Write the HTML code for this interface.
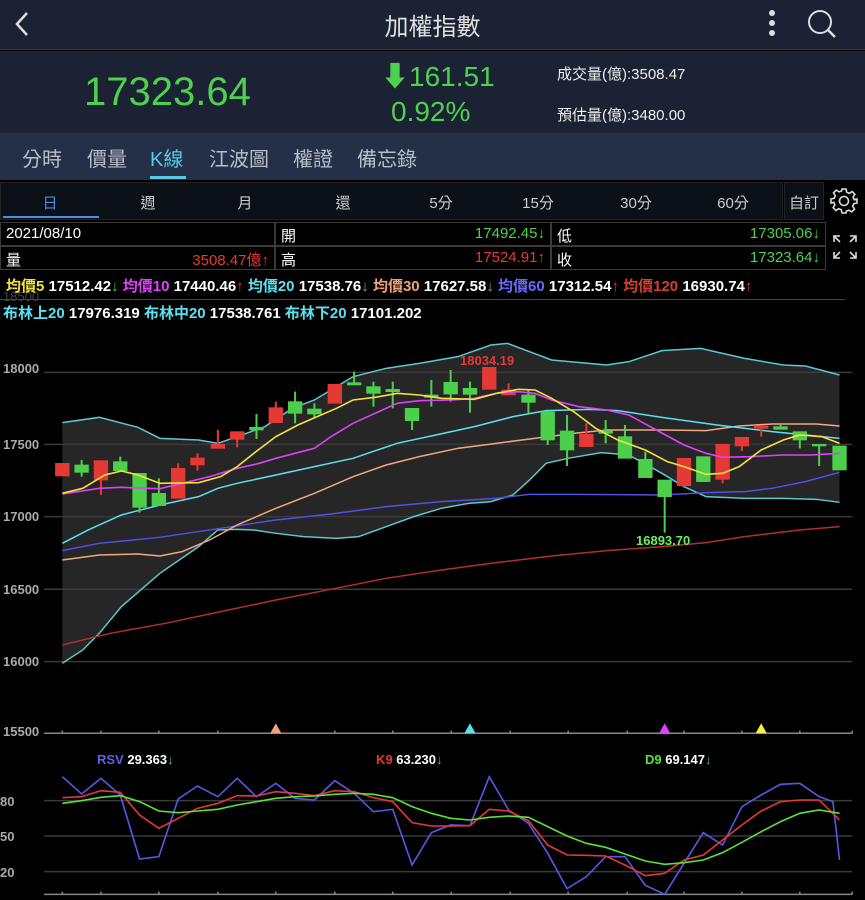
<!DOCTYPE html>
<html><head><meta charset="utf-8"><style>
*{margin:0;padding:0;box-sizing:border-box}
body{width:865px;height:900px;background:#000;overflow:hidden;font-family:"Liberation Sans","Noto Sans CJK TC",sans-serif;position:relative;color:#fff}
.a{position:absolute;white-space:nowrap}
.hdr{left:0;top:0;width:865px;height:50px;background:#1a2233;border-bottom:1px solid #2a3346}
.q{left:0;top:51px;width:865px;height:82px;background:#1a2233}
.tabs{left:0;top:133px;width:865px;height:47px;background:#233047}
.tab{top:143px;font-size:20px;color:#b8bfcc}
.per{left:0;top:182px;width:783px;height:38px;background:#0c1017;border:1px solid #222}
.pt{top:192px;font-size:15px;color:#ccc;transform:translateX(-50%)}
.cell{height:24px;border:1px solid #3a3a3a;background:#000;font-size:15px}
.g{color:#4fd04f}.r{color:#e53935}
.lg{top:275px;font-size:15px;font-weight:bold;color:#fff}
</style></head><body>
<div class="a hdr"></div>
<svg class="a" style="left:12px;top:10px" width="20" height="28"><path d="M15 3 L5 14 L15 25" stroke="#ddd" stroke-width="2.5" fill="none"/></svg>
<div class="a" style="left:0;width:865px;text-align:center;top:7px;font-size:24px;color:#e0e0e0">加權指數</div>
<svg class="a" style="left:764px;top:8px" width="16" height="30"><circle cx="8" cy="5" r="3" fill="#ddd"/><circle cx="8" cy="15" r="3" fill="#ddd"/><circle cx="8" cy="25" r="3" fill="#ddd"/></svg>
<svg class="a" style="left:806px;top:8px" width="32" height="32"><circle cx="14" cy="14" r="11" stroke="#ddd" stroke-width="2" fill="none"/><path d="M22 22 L29 29" stroke="#ddd" stroke-width="2.5"/></svg>
<div class="a q"></div>
<div class="a g" style="left:84px;top:70px;font-size:40px">17323.64</div>
<div class="a g" style="left:381px;top:55px;font-size:28px">⬇161.51</div>
<div class="a g" style="left:391px;top:96px;font-size:28px">0.92%</div>
<div class="a" style="left:557px;top:63px;font-size:15px;color:#eee">成交量(億):3508.47</div>
<div class="a" style="left:557px;top:104px;font-size:15px;color:#eee">預估量(億):3480.00</div>
<div class="a tabs"></div>
<div class="a tab" style="left:22px">分時</div>
<div class="a tab" style="left:87px">價量</div>
<div class="a tab" style="left:150px;color:#5ac8e8">K線</div>
<div class="a tab" style="left:209px">江波圖</div>
<div class="a tab" style="left:293px">權證</div>
<div class="a tab" style="left:357px">備忘錄</div>
<div class="a" style="left:150px;top:176px;width:36px;height:3px;background:#5ac8e8"></div>
<div class="a per"></div>
<div class="a pt" style="left:50px;color:#4a90e2">日</div>
<div class="a" style="left:3px;top:216px;width:96px;height:2px;background:#4a90e2"></div>
<div class="a pt" style="left:148px">週</div><div class="a pt" style="left:245px">月</div><div class="a pt" style="left:343px">還</div>
<div class="a pt" style="left:441px">5分</div><div class="a pt" style="left:538px">15分</div><div class="a pt" style="left:636px">30分</div><div class="a pt" style="left:733px">60分</div>
<div class="a" style="left:784px;top:182px;width:40px;height:38px;background:#0c1017;border:1px solid #222"></div>
<div class="a pt" style="left:804px">自訂</div>
<svg class="a" style="left:829px;top:186px" width="30" height="30" viewBox="0 0 30 30"><g fill="none" stroke="#ddd" stroke-width="1.6"><circle cx="15" cy="15" r="4.5"/><path d="M13 3h4l.7 3.2 2.6 1.1 2.8-1.8 2.8 2.8-1.8 2.8 1.1 2.6L28 13v4l-3.2.7-1.1 2.6 1.8 2.8-2.8 2.8-2.8-1.8-2.6 1.1L17 27h-4l-.7-3.2-2.6-1.1-2.8 1.8-2.8-2.8 1.8-2.8-1.1-2.6L2 17v-4l3.2-.7 1.1-2.6-1.8-2.8 2.8-2.8 2.8 1.8 2.6-1.1z"/></g></svg>
<div class="a cell" style="left:0;top:222px;width:275px;padding:2px 5px">2021/08/10</div>
<div class="a cell" style="left:275px;top:222px;width:276px;padding:2px 5px">開<span class="g" style="float:right">17492.45↓</span></div>
<div class="a cell" style="left:551px;top:222px;width:275px;padding:2px 5px">低<span class="g" style="float:right">17305.06↓</span></div>
<div class="a cell" style="left:0;top:246px;width:275px;padding:2px 5px">量<span class="r" style="float:right">3508.47億↑</span></div>
<div class="a cell" style="left:275px;top:246px;width:276px;padding:2px 5px">高<span class="r" style="float:right">17524.91↑</span></div>
<div class="a cell" style="left:551px;top:246px;width:275px;padding:2px 5px">收<span class="g" style="float:right">17323.64↓</span></div>
<svg class="a" style="left:832px;top:234px" width="26" height="26"><g stroke="#ddd" stroke-width="1.6" fill="none"><path d="M2 8V2h6M2 2l6 6M24 8V2h-6M24 2l-6 6M2 18v6h6M2 24l6-6M24 18v6h-6M24 24l-6-6"/></g></svg>
<div class="a" style="left:3px;top:289px;font-size:13px;color:#444">18500</div>
<div class="a lg" style="left:6px"><span style="color:#f5e23c">均價5</span> 17512.42<span class="g">↓</span> <span style="color:#e040fb">均價10</span> 17440.46<span class="r">↑</span> <span style="color:#5ce0f0">均價20</span> 17538.76<span class="g">↓</span> <span style="color:#f0a07a">均價30</span> 17627.58<span class="g">↓</span> <span style="color:#6a6aff">均價60</span> 17312.54<span class="r">↑</span> <span style="color:#d04030">均價120</span> 16930.74<span class="r">↑</span></div>
<div class="a" style="left:0;top:299px;width:845px;height:1px;background:#444"></div>
<div class="a lg" style="left:3px;top:302px;color:#fff"><span style="color:#5ce0f0">布林上20</span> 17976.319 <span style="color:#5ce0f0">布林中20</span> 17538.761 <span style="color:#5ce0f0">布林下20</span> 17101.202</div>

<svg class="a" style="left:0;top:340px" width="865" height="400">
<g transform="scale(0.5516,0.3333)" fill="none">
<polygon fill="#262626" points="113,248 180,232 250,262 290,295 360,300 395,310 430,290 480,260 530,205 570,180 600,150 640,110 700,85 760,70 830,50 890,15 920,10 1000,60 1100,75 1140,65 1200,32 1270,25 1350,55 1420,75 1460,78 1522,105 1522,487 1480,478 1420,475 1350,475 1280,470 1240,440 1200,400 1140,345 1090,338 1030,355 990,370 960,420 930,465 890,485 850,490 800,505 750,530 700,560 650,590 610,595 550,590 500,580 460,570 430,568 395,570 360,620 290,700 220,800 180,880 150,930 113,970"/>
<g stroke="#3a3a3a" stroke-width="1.5">
<path vector-effect="non-scaling-stroke" d="M80 97H1545M80 313H1545M80 530H1545M80 748H1545M80 965H1545"/>
<path vector-effect="non-scaling-stroke" stroke="#888" d="M80 1180H1545M113 1172v8M183 1172v8M288 1172v8M395 1172v8M500 1172v8M607 1172v8M712 1172v8M818 1172v8M925 1172v8M1030 1172v8M1137 1172v8M1240 1172v8M1345 1172v8M1450 1172v8M1545 1172v8"/>
</g>
<g stroke-width="1.5">
<polyline vector-effect="non-scaling-stroke" stroke="#5cc8d0" points="113,248 180,232 250,262 290,295 360,300 395,310 430,290 480,260 530,205 570,180 600,150 640,110 700,85 760,70 830,50 890,15 920,10 1000,60 1100,75 1140,65 1200,32 1270,25 1350,55 1420,75 1460,78 1522,105"/>
<polyline vector-effect="non-scaling-stroke" stroke="#5cc8d0" points="113,970 150,930 180,880 220,800 290,700 360,620 395,570 430,568 460,570 500,580 550,590 610,595 650,590 700,560 750,530 800,505 850,490 890,485 930,465 960,420 990,370 1030,355 1090,338 1140,345 1200,400 1240,440 1280,470 1350,475 1420,475 1480,478 1522,487"/>
<polyline vector-effect="non-scaling-stroke" stroke="#b03030" points="113,915 200,880 300,850 400,815 500,780 600,748 700,715 800,690 900,668 1000,648 1100,632 1200,620 1280,608 1350,590 1450,570 1522,560"/>
<polyline vector-effect="non-scaling-stroke" stroke="#5050e8" points="113,632 180,610 290,592 400,565 500,540 600,522 700,500 800,485 900,475 960,463 1040,463 1120,464 1200,465 1280,458 1350,455 1400,445 1460,425 1522,397"/>
<polyline vector-effect="non-scaling-stroke" stroke="#f0a880" points="113,660 180,645 250,642 290,648 330,635 380,600 430,555 500,505 570,460 640,410 700,375 760,350 830,325 900,310 960,297 1040,280 1100,270 1200,270 1280,272 1340,258 1400,252 1480,252 1522,258"/>
<polyline vector-effect="non-scaling-stroke" stroke="#5ce0f0" points="113,610 160,570 220,525 290,495 360,470 395,445 430,430 500,405 570,380 640,355 720,310 790,285 860,260 930,230 990,212 1070,208 1120,212 1200,232 1300,255 1400,275 1522,295"/>
</g>
<g stroke-width="2" stroke-linecap="butt">
<g stroke="#e53935" fill="#e53935">
<path vector-effect="non-scaling-stroke" d="M183 362V465M323 370V475M358 340V392M395 270V325M430 275V322M500 185V248M607 133V190M887 82V148M922 130V165M1063 250V320M1240 355V440M1310 313V430M1345 292V333M1380 258V290"/>
<rect x="101" y="370" width="24" height="38"/><rect x="171" y="362" width="24" height="58"/><rect x="311" y="385" width="24" height="90"/><rect x="346" y="354" width="24" height="21"/><rect x="383" y="313" width="24" height="12"/><rect x="418" y="275" width="24" height="23"/><rect x="488" y="203" width="24" height="45"/><rect x="595" y="133" width="24" height="57"/><rect x="875" y="82" width="24" height="66"/><rect x="910" y="150" width="24" height="15"/><rect x="1051" y="283" width="24" height="37"/><rect x="1228" y="355" width="24" height="82"/><rect x="1298" y="313" width="24" height="105"/><rect x="1333" y="292" width="24" height="26"/><rect x="1368" y="258" width="24" height="7"/>
</g>
<g stroke="#4cd04c" fill="#4cd04c">
<path vector-effect="non-scaling-stroke" d="M148 360V410M218 350V392M253 400V518M288 415V497M465 222V297M535 155V250M570 190V235M642 95V135M677 125V200M712 125V205M747 205V270M782 120V200M817 90V185M852 125V218M958 150V220M993 215V315M1028 225V378M1098 240V310M1133 255V355M1170 335V413M1205 420V578M1275 350V425M1415 255V268M1450 275V325M1485 313V378M1522 318V390"/>
<rect x="136" y="375" width="24" height="22"/><rect x="206" y="365" width="24" height="27"/><rect x="241" y="400" width="24" height="102"/><rect x="276" y="460" width="24" height="37"/><rect x="453" y="262" width="24" height="8"/><rect x="523" y="185" width="24" height="35"/><rect x="558" y="207" width="24" height="15"/><rect x="630" y="128" width="24" height="7"/><rect x="665" y="140" width="24" height="20"/><rect x="700" y="148" width="24" height="7"/><rect x="735" y="205" width="24" height="37"/><rect x="770" y="165" width="24" height="7"/><rect x="805" y="127" width="24" height="35"/><rect x="840" y="145" width="24" height="18"/><rect x="946" y="165" width="24" height="22"/><rect x="981" y="215" width="24" height="85"/><rect x="1016" y="273" width="24" height="57"/><rect x="1086" y="272" width="24" height="8"/><rect x="1121" y="290" width="24" height="65"/><rect x="1158" y="358" width="24" height="55"/><rect x="1193" y="420" width="24" height="50"/><rect x="1263" y="350" width="24" height="75"/><rect x="1403" y="260" width="24" height="8"/><rect x="1438" y="275" width="24" height="25"/><rect x="1473" y="313" width="24" height="5"/><rect x="1510" y="318" width="24" height="72"/>
</g>
</g>
<g stroke-width="1.6">
<polyline vector-effect="non-scaling-stroke" stroke="#e040fb" points="113,462 180,445 220,442 290,446 330,430 380,410 430,385 470,370 500,355 570,325 600,290 640,250 680,220 720,190 760,182 820,180 860,175 900,160 940,155 970,160 1000,180 1050,200 1100,210 1140,225 1190,270 1240,315 1280,340 1310,352 1360,350 1420,345 1470,345 1522,340"/>
<polyline vector-effect="non-scaling-stroke" stroke="#f5e23c" points="113,460 150,445 190,405 220,393 250,405 290,430 360,428 400,410 430,380 460,340 500,290 540,255 575,230 610,205 640,180 680,172 720,160 760,165 800,175 860,178 900,160 940,148 970,150 1000,175 1040,215 1080,265 1120,300 1170,330 1210,365 1240,380 1280,403 1310,400 1340,380 1380,330 1420,300 1450,285 1490,290 1522,310"/>
</g>
<polygon fill="#f0a080" points="490,1180 500,1150 510,1180"/>
<polygon fill="#5ce0f0" points="842,1180 852,1150 862,1180"/>
<polygon fill="#e040fb" points="1195,1180 1205,1150 1215,1180"/>
<polygon fill="#f5f03c" points="1370,1180 1380,1150 1390,1180"/>
</g>
<g font-size="13" font-weight="bold" fill="#aaa">
<text x="3" y="33">18000</text><text x="3" y="109">17500</text><text x="3" y="181">17000</text><text x="3" y="254">16500</text><text x="3" y="326">16000</text><text x="3" y="396">15500</text>
<text x="460" y="25" fill="#e53935">18034.19</text><text x="636" y="205" fill="#6cf05c">16893.70</text>
</g>
</svg>

<svg class="a" style="left:0;top:730px" width="865" height="170">
<g transform="scale(0.5516,0.3333)" fill="none">
<path vector-effect="non-scaling-stroke" stroke="#3a3a3a" stroke-width="1.5" d="M80 212H1545M80 318H1545M80 425H1545"/>
<path vector-effect="non-scaling-stroke" stroke="#888" stroke-width="1.5" d="M80 493H1545M113 485v8M183 485v8M288 485v8M395 485v8M500 485v8M607 485v8M712 485v8M818 485v8M925 485v8M1030 485v8M1137 485v8M1240 485v8M1345 485v8M1450 485v8M1545 485v8"/>
<g stroke-width="1.6">
<polyline vector-effect="non-scaling-stroke" stroke="#5858e8" points="113,140 148,192 183,145 218,195 253,387 288,380 323,207 358,168 395,200 430,145 465,200 500,160 535,205 570,210 607,152 642,190 677,245 712,238 747,405 782,308 817,285 852,287 887,140 922,240 958,280 993,370 1028,476 1063,440 1098,380 1133,380 1170,466 1205,493 1240,400 1275,308 1310,345 1345,230 1380,195 1415,163 1450,160 1485,200 1510,215 1522,390"/>
<polyline vector-effect="non-scaling-stroke" stroke="#e53935" points="113,203 148,200 183,182 218,187 253,255 288,295 323,265 358,235 395,220 430,197 465,198 500,185 535,190 570,197 607,182 642,185 677,203 712,215 747,278 782,288 817,288 852,287 887,238 922,243 958,272 993,345 1028,375 1063,376 1098,378 1133,405 1170,437 1205,430 1240,390 1275,375 1310,330 1345,285 1380,243 1415,215 1450,210 1485,210 1522,270"/>
<polyline vector-effect="non-scaling-stroke" stroke="#5ce03c" points="113,220 148,212 183,202 218,197 253,215 288,243 323,248 358,243 395,238 430,225 465,215 500,205 535,200 570,198 607,193 642,190 677,193 712,203 747,230 782,250 817,265 852,270 887,262 922,258 958,262 993,290 1028,318 1063,340 1098,352 1133,372 1170,393 1205,403 1240,398 1275,390 1310,368 1345,337 1380,305 1415,275 1450,250 1485,240 1522,250"/>
</g>
</g>
<g font-size="13" font-weight="bold" fill="#aaa">
<text x="0" y="76">80</text><text x="0" y="111">50</text><text x="0" y="147">20</text>
</g>
<g font-size="13" font-weight="bold">
<text x="97" y="34" fill="#6060f0">RSV <tspan fill="#fff">29.363</tspan><tspan fill="#4fd04f">↓</tspan></text>
<text x="376" y="34" fill="#e53935">K9 <tspan fill="#fff">63.230</tspan><tspan fill="#4fd04f">↓</tspan></text>
<text x="645" y="34" fill="#5ce03c">D9 <tspan fill="#fff">69.147</tspan><tspan fill="#4fd04f">↓</tspan></text>
</g>
</svg>
</body></html>
